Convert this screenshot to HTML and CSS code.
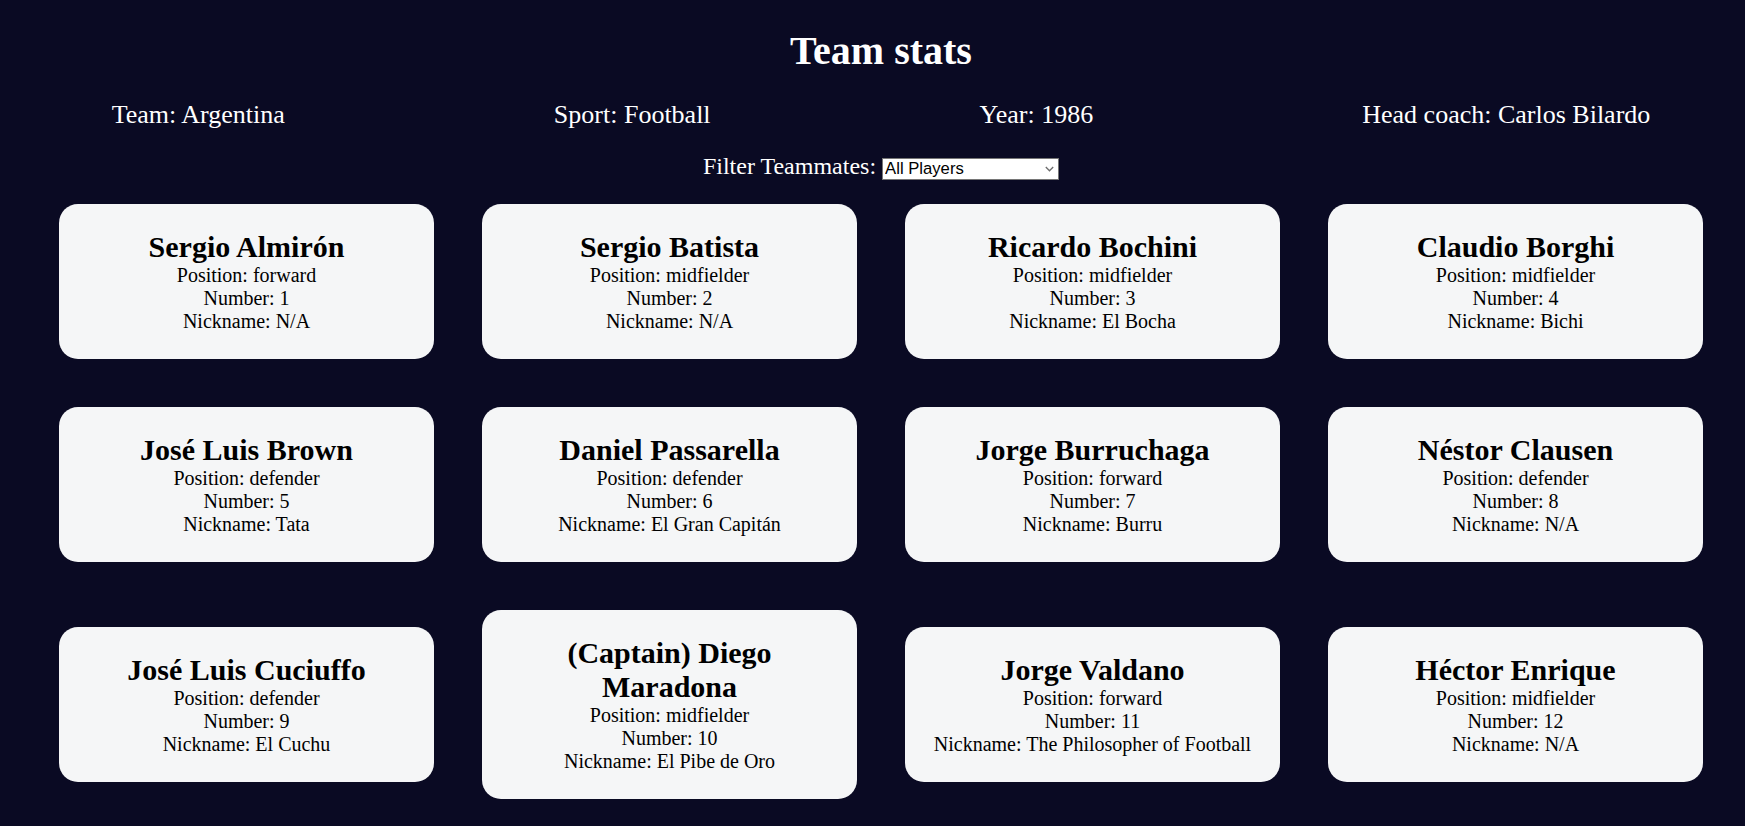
FILE: index.html
```html
<!DOCTYPE html>
<html lang="en">
<head>
<meta charset="utf-8">
<title>Team stats</title>
<link rel="stylesheet" href="styles.css">
</head>
<body>
<main class="page">
  <h1 class="title">Team stats</h1>
  <div class="team-stats">
    <p class="stat">Team: <span>Argentina</span></p>
    <p class="stat">Sport: <span>Football</span></p>
    <p class="stat">Year: <span>1986</span></p>
    <p class="stat">Head coach: <span>Carlos Bilardo</span></p>
  </div>
  <div class="filter">
    <label class="options-label" for="players">Filter Teammates:</label>
    <span class="select-wrap">
      <select class="players" id="players" name="players">
        <option value="all">All Players</option>
        <option value="nickname">Players With Nicknames</option>
        <option value="forward">Position Forward</option>
        <option value="midfielder">Position Midfielder</option>
        <option value="defender">Position Defender</option>
        <option value="goalkeeper">Position Goalkeeper</option>
      </select>
      <svg class="chevron" width="9" height="6" viewBox="0 0 9 6" aria-hidden="true"><path d="M0.8 1 L4.5 4.8 L8.2 1" fill="none" stroke="#6d6d6d" stroke-width="1.3"/></svg>
    </span>
  </div>
  <div class="cards">
    <div class="player-card"><h2>Sergio Almirón</h2><p>Position: forward</p><p>Number: 1</p><p>Nickname: N/A</p></div>
    <div class="player-card"><h2>Sergio Batista</h2><p>Position: midfielder</p><p>Number: 2</p><p>Nickname: N/A</p></div>
    <div class="player-card"><h2>Ricardo Bochini</h2><p>Position: midfielder</p><p>Number: 3</p><p>Nickname: El Bocha</p></div>
    <div class="player-card"><h2>Claudio Borghi</h2><p>Position: midfielder</p><p>Number: 4</p><p>Nickname: Bichi</p></div>
    <div class="player-card"><h2>José Luis Brown</h2><p>Position: defender</p><p>Number: 5</p><p>Nickname: Tata</p></div>
    <div class="player-card"><h2>Daniel Passarella</h2><p>Position: defender</p><p>Number: 6</p><p>Nickname: El Gran Capitán</p></div>
    <div class="player-card"><h2>Jorge Burruchaga</h2><p>Position: forward</p><p>Number: 7</p><p>Nickname: Burru</p></div>
    <div class="player-card"><h2>Néstor Clausen</h2><p>Position: defender</p><p>Number: 8</p><p>Nickname: N/A</p></div>
    <div class="player-card"><h2>José Luis Cuciuffo</h2><p>Position: defender</p><p>Number: 9</p><p>Nickname: El Cuchu</p></div>
    <div class="player-card"><h2>(Captain) Diego Maradona</h2><p>Position: midfielder</p><p>Number: 10</p><p>Nickname: El Pibe de Oro</p></div>
    <div class="player-card"><h2>Jorge Valdano</h2><p>Position: forward</p><p>Number: 11</p><p>Nickname: The Philosopher of Football</p></div>
    <div class="player-card"><h2>Héctor Enrique</h2><p>Position: midfielder</p><p>Number: 12</p><p>Nickname: N/A</p></div>
  </div>
</main>
</body>
</html>
```

FILE: styles.css
```css
*,
*::before,
*::after {
  box-sizing: border-box;
}

html {
  background-color: #0a0a23;
}

body {
  margin: 0;
  padding: 0 0 0 17px;
  background-color: #0a0a23;
  font-family: "Liberation Serif", "Times New Roman", serif;
  text-align: center;
  color: #000;
}

.page {
  display: block;
}

.title {
  color: #ffffff;
  font-size: 40px;
  font-weight: bold;
  margin: 27px 0 0;
}

.team-stats {
  display: flex;
  justify-content: center;
  gap: 269px;
  margin: 26px 0 0;
  color: #ffffff;
  font-size: 26px;
}

.stat {
  margin: 0;
  white-space: nowrap;
}

.filter {
  margin-top: 23px;
  display: flex;
  justify-content: center;
  align-items: baseline;
  gap: 6px;
}

.options-label {
  color: #ffffff;
  font-size: 24px;
}

.select-wrap {
  position: relative;
  display: inline-block;
}

.players {
  appearance: none;
  -webkit-appearance: none;
  width: 177px;
  height: 22px;
  font-family: "Liberation Sans", Arial, sans-serif;
  font-size: 16.67px;
  background-color: #ffffff;
  color: #000;
  border: 1px solid #767676;
  border-radius: 0;
  padding: 0 2px;
  margin: 0;
}

.chevron {
  position: absolute;
  right: 5px;
  top: 8px;
  pointer-events: none;
}

.cards {
  display: flex;
  flex-wrap: wrap;
  justify-content: center;
  align-items: center;
}

.player-card {
  width: 375px;
  margin: 24px;
  padding: 26px;
  background-color: #f5f6f7;
  border-radius: 19px;
}

.player-card h2 {
  margin: 0;
  font-size: 30px;
  font-weight: bold;
}

.player-card p {
  margin: 0;
  font-size: 20px;
}
```
